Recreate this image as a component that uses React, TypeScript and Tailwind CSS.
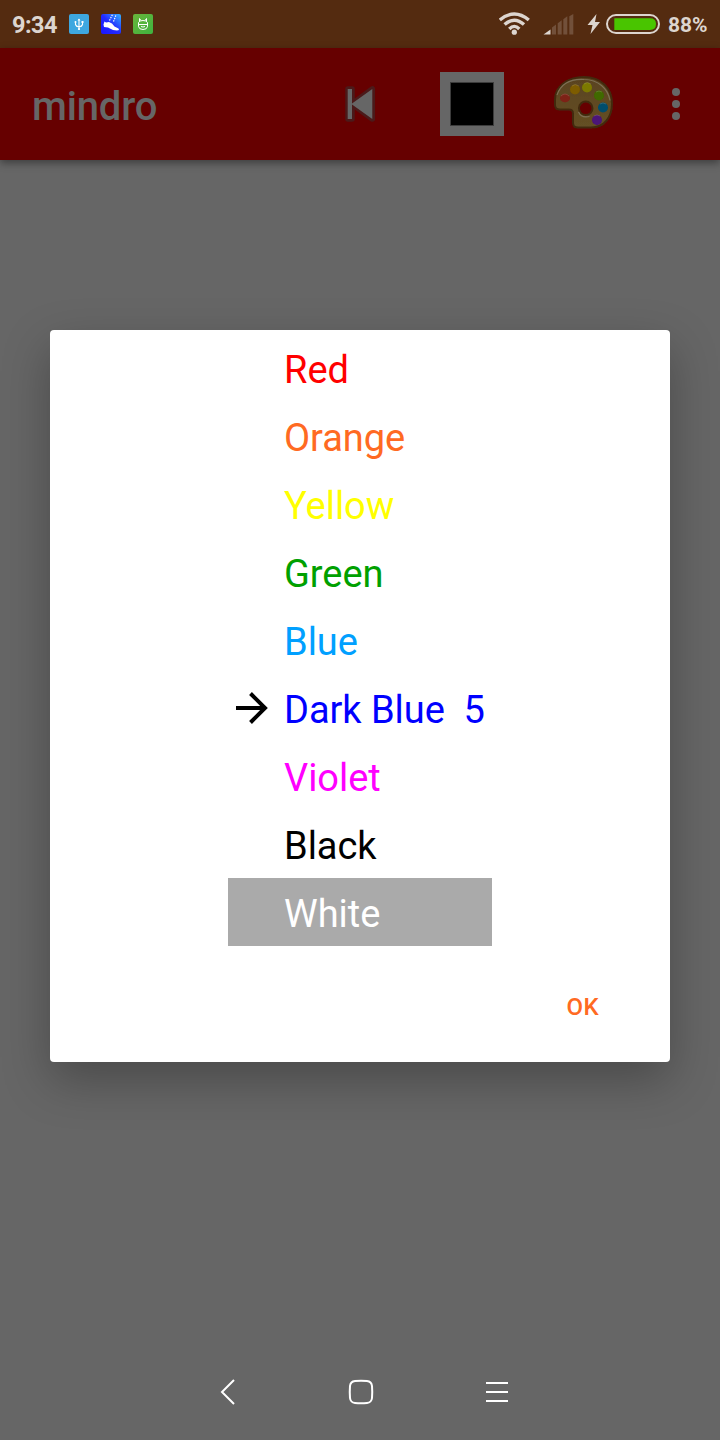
const colors = [
  { name: 'Red', style: 'text-[#ff0000]' },
  { name: 'Orange', style: 'text-[#ff6a22]' },
  { name: 'Yellow', style: 'text-[#ffff00]' },
  { name: 'Green', style: 'text-[#00a000]' },
  { name: 'Blue', style: 'text-[#00a0ff]' },
  { name: 'Dark Blue  5', style: 'text-[#0000ff]', selected: true },
  { name: 'Violet', style: 'text-[#ff00ff]' },
  { name: 'Black', style: 'text-black' },
  { name: 'White', style: 'bg-[#aaaaaa] text-white' },
];

function StatusBar() {
  return (
    <header className="flex h-12 items-center bg-[#542b10] text-[#ddd5cf]">
      <span className="ml-3 w-[57px] pt-0.5 text-[23.5px] font-bold leading-7 tracking-[-0.5px]">9:34</span>
      <svg width="84" height="20" viewBox="0 0 84 20" fill="none">
        <defs>
          <linearGradient id="shoe" x1="0" y1="1" x2="1" y2="0">
            <stop offset="0" stopColor="#1b14ff" />
            <stop offset=".5" stopColor="#222bff" />
            <stop offset="1" stopColor="#35b4ff" />
          </linearGradient>
          <linearGradient id="droid" x1="0" y1="0" x2="1" y2="1">
            <stop stopColor="#6ab43b" />
            <stop offset="1" stopColor="#3eb33f" />
          </linearGradient>
        </defs>
        <rect width="20" height="20" rx="2" fill="#3ea7e0" />
        <path d="M10 5v11M6.500 8v2.500q.5 2 3.500 2.500 3-.5 3.500-2.500V8" stroke="white" strokeWidth="1.100" />
        <path d="m8.500 6.500 1.500-2 1.500 2z" fill="white" />
        <circle cx="6.500" cy="8" r="1" fill="white" />
        <circle cx="10" cy="15" r="1.100" fill="white" />
        <rect x="12.500" y="7" width="2" height="2" fill="white" />
        <rect x="32" width="20" height="20" rx="2" fill="url(#shoe)" />
        <path d="M35.500 7.500 37 8.500l3-.5 3 1.500 2.500 3 4 2 .5 1.500-2 .5-4-.5-5-2.500-4-.5-.500-2.500z" fill="white" />
        <path d="m40.500 6.500 3-6M44.500 7.500 47 1" stroke="white" strokeWidth="1.200" strokeDasharray="1.400 1.100" />
        <rect x="64" width="20" height="20" rx="2" fill="url(#droid)" />
        <path d="M69.500 8.500q1-2 4.500-2t4.500 2v4q-.500 3-4.500 3t-4.500-3zM69.500 10.500h9M70.500 7.500v-3l1.500 2M77.500 7.500v-3l-1.500 2M72 12.500q2 1 4 0" stroke="white" />
      </svg>
      <svg className="ml-auto" width="161" height="24" viewBox="0 0 161 24" fill="none">
        <g stroke="#ddd5cf" strokeWidth="3.400">
          <path d="M.8 8Q15.300-4 29.800 8M5.600 12.600Q15.300 3.800 25 12.600M10.300 17Q15.300 11.800 20.300 17" />
          <circle cx="15.300" cy="20.200" r="2.600" fill="#ddd5cf" stroke="none" />
        </g>
        <path d="m44.500 22.600 7-5.100v5.100z" fill="#ddd5cf" />
        <path d="M53 22.600v-7.100l4-3v10.100zM58.700 22.600V11.200l4-3v14.400zM64.300 22.600V7.200l4-3v18.400zM70.300 22.600V4.200l4-2.200v20.600z" fill="#72503a" />
        <path d="m97.500 2-9 11h5l-2 9 9.500-12h-5z" fill="#ddd5cf" />
        <rect x="108" y="3" width="52" height="18" rx="9" stroke="#ddd5cf" strokeWidth="2" />
        <path d="M115.300 6.200H151q6 0 6 5.900t-6 5.900h-35.700z" fill="#49c500" />
      </svg>
      <span className="ml-2 mr-3 w-10 whitespace-nowrap pt-0.5 text-[21px] font-bold leading-7">88%</span>
    </header>
  );
}

function Palette() {
  return (
    <svg width="64" height="64" viewBox="0 0 64 64">
      <defs>
        <linearGradient id="wood" x1="0" y1="0" x2="0" y2="1">
          <stop stopColor="#59421f" />
          <stop offset="1" stopColor="#655025" />
        </linearGradient>
        <filter id="soft"><feGaussianBlur stdDeviation=".7" /></filter>
      </defs>
      <g filter="url(#soft)">
        <path fillRule="evenodd" d="M32 5C15 5 3 15 3 27v6q0 4.500 5 4.500h9q4 0 4 4V51q0 4.500 5 4.500h13c13 0 21-10 21-24C60 16 49 5 32 5Zm1.700 24.500a6.800 6.800 0 1 1 0 13.600 6.800 6.800 0 0 1 0-13.600Z" fill="url(#wood)" stroke="#432a10" strokeWidth="2" />
        <path d="M5 23C10 9 23 7 32 7.500c14 0 24 9 26 21M26.500 40q3 6.500 11 4.500" fill="none" stroke="#7c7055" strokeWidth="1.200" />
        <g>
          <ellipse cx="13" cy="26" rx="5" ry="4.300" fill="#7d2217" />
          <circle cx="23" cy="17.500" r="5" fill="#7d5b00" />
          <circle cx="35" cy="15.500" r="5" fill="#7b7900" />
          <circle cx="47" cy="23.500" r="5" fill="#3f6900" />
          <circle cx="51" cy="35.500" r="5" fill="#004d6d" />
          <circle cx="45" cy="48" r="5" fill="#4b1278" />
        </g>
        <path d="M9 24q4-4 8 0M20 14q3-3 7 0M32 12q3-3 7 0M44 20q3-2 6 0M48 32q3-2 6 0M42 44q3-2 6 0" stroke="#b8b0a0" strokeOpacity=".25" fill="none" />
      </g>
    </svg>
  );
}

function Toolbar() {
  return (
    <div className="flex h-28 items-center bg-[#660000] shadow-[0_3px_8px_#0006]">
      <h1 className="ml-8 mr-auto pt-1.5 text-[40px] font-medium leading-[48px] tracking-[-0.15px] text-[#666]">mindro</h1>
      <svg width="32" height="38" viewBox="0 0 32 38">
        <path d="M4 4h4v30H4zM8 19 28.300 4v30z" fill="#4b1a1a" stroke="#4b1a1a" strokeWidth="5.500" strokeLinejoin="round" />
        <path d="M3.700 4H8v14.500L28.300 4v30L8 19.500V34H3.700z" fill="#666" />
      </svg>
      <div className="ml-[64px] flex size-16 items-center justify-center bg-[#666]">
        <div className="size-11 border border-[#3c3c3c] bg-black" />
      </div>
      <div className="ml-12"><Palette /></div>
      <div className="ml-14 mr-10 flex flex-col gap-1">
        <i className="size-2 rounded-full bg-[#666]" />
        <i className="size-2 rounded-full bg-[#666]" />
        <i className="size-2 rounded-full bg-[#666]" />
      </div>
    </div>
  );
}

export default function App() {
  return (
    <div className="flex h-[1440px] w-[720px] flex-col bg-[#666] font-['Roboto',sans-serif]">
      <StatusBar />
      <Toolbar />
      <main className="mx-[50px] mt-[170px] flex h-[732px] flex-col rounded bg-white pt-1 shadow-[0_18px_48px_#00000048]">
        <ul className="mx-auto w-[264px]">
          {colors.map((color) => (
            <li key={color.name} className={`flex h-[68px] items-center ${color.style}`}>
              <span className="ml-2 w-12">
                {color.selected && (
                  <svg width="32" height="32" viewBox="0 0 32 32" fill="none" stroke="black" strokeWidth="4">
                    <path d="M0 16h29M14.500 1.500 29 16 14.500 30.500" />
                  </svg>
                )}
              </span>
              <span className="whitespace-pre pt-1 text-[38px] leading-[44px] tracking-[-0.04px]">{color.name}</span>
            </li>
          ))}
        </ul>
        <button className="ml-auto mr-[71px] mt-[46px] text-[24px] font-medium leading-[30px] tracking-[0.4px] text-[#ff6a22]">OK</button>
      </main>
      <nav className="mt-auto flex h-24 items-center text-white">
        <svg className="ml-[220px]" width="16" height="26" viewBox="0 0 16 26" fill="none" stroke="currentColor" strokeWidth="2"><path d="M14 1 2 13l12 12" /></svg>
        <svg className="ml-[112px]" width="26" height="26" viewBox="0 0 26 26" fill="none" stroke="currentColor" strokeWidth="2"><path d="M7 2Q13 1.400 19 2q4.500.5 5 5 .5 6 0 12-.5 4.500-5 5-6 .6-12 0-4.500-.5-5-5-.5-6 0-12Q2.500 2.500 7 2Z" /></svg>
        <svg className="ml-[112px]" width="22" height="22" viewBox="0 0 22 22" stroke="currentColor" strokeWidth="2"><path d="M0 2h22M0 11h22M0 20h22" /></svg>
      </nav>
    </div>
  );
}
